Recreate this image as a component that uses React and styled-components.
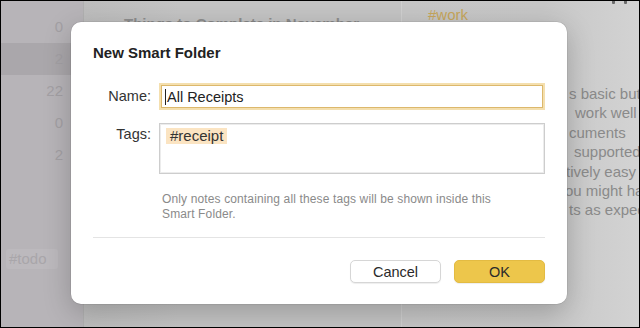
import React from "react";
import styled, { createGlobalStyle } from "styled-components";

const Global = createGlobalStyle`
  html, body { margin: 0; padding: 0; background: #000; }
  body { font-family: "Liberation Sans", Arial, sans-serif; }
`;

const Frame = styled.div`
  position: relative;
  width: 640px;
  height: 328px;
  box-sizing: border-box;
  border: 1px solid #000;
  display: grid;
  grid-template-columns: 82px 318px 1fr;
  overflow: hidden;
  font-family: "Liberation Sans", Arial, sans-serif;
`;

const Sidebar = styled.div`
  background: #b7b4b8;
  padding-top: 10px;
  display: flex;
  flex-direction: column;
`;

const CountRow = styled.div`
  height: 32px;
  line-height: 32px;
  text-align: right;
  padding-right: 20px;
  font-size: 15px;
  color: #a3a0a4;
  background: ${(p) => (p.$selected ? "#aaa7ab" : "transparent")};
`;

const SideTag = styled.div`
  margin: 78px 0 0 5px;
  width: 52px;
  height: 20px;
  line-height: 20px;
  border-radius: 3px;
  background: #bcb9bd;
  color: #a9a6aa;
  font-size: 15px;
  padding-left: 3px;
  box-sizing: border-box;
`;

const Middle = styled.div`
  background: linear-gradient(90deg, #bdbdbd 0%, #c4c4c4 30%, #c4c4c4 100%);
  border-left: 1px solid #b0b0b0;
  padding: 14px 0 0 40px;
`;

const NoteTitle = styled.div`
  font-size: 15px;
  line-height: 18px;
  font-weight: bold;
  color: #8e8e8e;
  white-space: nowrap;
`;

const Right = styled.div`
  background: linear-gradient(90deg, #c6c6c6 0%, #c7c7c7 60%, #d3d3d3 100%);
  border-left: 1px solid #d0d0d0;
  padding: 5px 0 0 26px;
  overflow: hidden;
  position: relative;
`;

const WorkTag = styled.div`
  font-size: 15px;
  line-height: 18px;
  color: #c6a65c;
`;

const Marks = styled.div`
  position: absolute;
  top: -1px;
  right: 12px;
  display: flex;
  gap: 9px;
`;

const Mark = styled.span`
  display: block;
  width: 3px;
  height: 4px;
  border-radius: 1px;
  background: #6a6a6a;
`;

const BodyText = styled.div`
  margin-top: 60px;
  font-size: 15px;
  line-height: 19.4px;
  color: #8a8a8a;
  white-space: nowrap;
`;

const TextLine = styled.div`
  padding-left: ${(p) => p.$x - 427}px;
`;

const Dialog = styled.div`
  position: absolute;
  left: 70px;
  top: 21px;
  width: 496px;
  box-sizing: border-box;
  background: #fff;
  border-radius: 10px;
  padding: 22px 22px 21px;
  box-shadow: 0 0 0 0.5px rgba(0, 0, 0, 0.12), 0 8px 28px rgba(0, 0, 0, 0.22);
`;

const Title = styled.div`
  font-size: 15px;
  line-height: 18px;
  font-weight: bold;
  color: #222;
`;

const Form = styled.div`
  margin-top: 23px;
  display: grid;
  grid-template-columns: 58px 1fr;
  column-gap: 8px;
  row-gap: 15px;
`;

const Label = styled.div`
  text-align: right;
  font-size: 14.5px;
  line-height: 23px;
  color: #333;
`;

const NameInput = styled.div`
  height: 23px;
  box-sizing: border-box;
  border: 1px solid #dcb86c;
  box-shadow: 0 0 0 2px #f4dfae;
  padding-left: 3px;
  display: flex;
  align-items: center;
  font-size: 14.5px;
  color: #222;
  margin: 0 2px 0 2px;
`;

const Caret = styled.span`
  display: inline-block;
  width: 1px;
  height: 16px;
  background: #222;
  margin-right: 1px;
`;

const TagBox = styled.div`
  height: 51px;
  box-sizing: border-box;
  border: 1px solid #cdcdcd;
  box-shadow: inset 0 0 0 1px #ececec;
  padding: 3px 6px;
`;

const Chip = styled.span`
  display: inline-block;
  height: 16px;
  line-height: 16px;
  padding: 0 4px;
  background: #fbe4c2;
  color: #333;
  font-size: 15px;
`;

const Help = styled.div`
  grid-column: 2;
  margin-top: 3px;
  padding-left: 3px;
  max-width: 345px;
  font-size: 12px;
  line-height: 15px;
  letter-spacing: 0.13px;
  color: #8a8a8a;
`;

const Divider = styled.div`
  margin-top: 15px;
  height: 1px;
  background: #e4e4e4;
`;

const Buttons = styled.div`
  margin-top: 22px;
  display: flex;
  justify-content: flex-end;
  gap: 13px;
`;

const Button = styled.div`
  width: 91px;
  height: 23px;
  box-sizing: border-box;
  border-radius: 5px;
  display: flex;
  align-items: center;
  justify-content: center;
  font-size: 14.5px;
  color: #2a2a2a;
  background: ${(p) => (p.$primary ? "#edc64b" : "#fff")};
  border: 1px solid ${(p) => (p.$primary ? "#e3bb42" : "#d6d6d6")};
  box-shadow: 0 1px 1px rgba(0, 0, 0, 0.07);
`;

const counts = ["0", "2", "22", "0", "2"];
const lines = [
  { x: 568, t: "s basic but" },
  { x: 574, t: "work well" },
  { x: 568, t: "cuments" },
  { x: 573, t: "supported" },
  { x: 565, t: "tively easy" },
  { x: 564, t: "ou might have" },
  { x: 568, t: "ts as expected" },
];

export default function App() {
  return (
    <>
      <Global />
      <Frame>
        <Sidebar>
          {counts.map((c, i) => (
            <CountRow key={i} $selected={i === 1}>
              {c}
            </CountRow>
          ))}
          <SideTag>#todo</SideTag>
        </Sidebar>
        <Middle>
          <NoteTitle>Things to Complete in November</NoteTitle>
        </Middle>
        <Right>
          <Marks>
            <Mark />
            <Mark />
          </Marks>
          <WorkTag>#work</WorkTag>
          <BodyText>
            {lines.map((l, i) => (
              <TextLine key={i} $x={l.x}>
                {l.t}
              </TextLine>
            ))}
          </BodyText>
        </Right>
        <Dialog>
          <Title>New Smart Folder</Title>
          <Form>
            <Label>Name:</Label>
            <NameInput>
              <Caret />
              All Receipts
            </NameInput>
            <Label>Tags:</Label>
            <TagBox>
              <Chip>#receipt</Chip>
            </TagBox>
            <Help>
              Only notes containing all these tags will be shown inside this Smart Folder.
            </Help>
          </Form>
          <Divider />
          <Buttons>
            <Button>Cancel</Button>
            <Button $primary>OK</Button>
          </Buttons>
        </Dialog>
      </Frame>
    </>
  );
}
